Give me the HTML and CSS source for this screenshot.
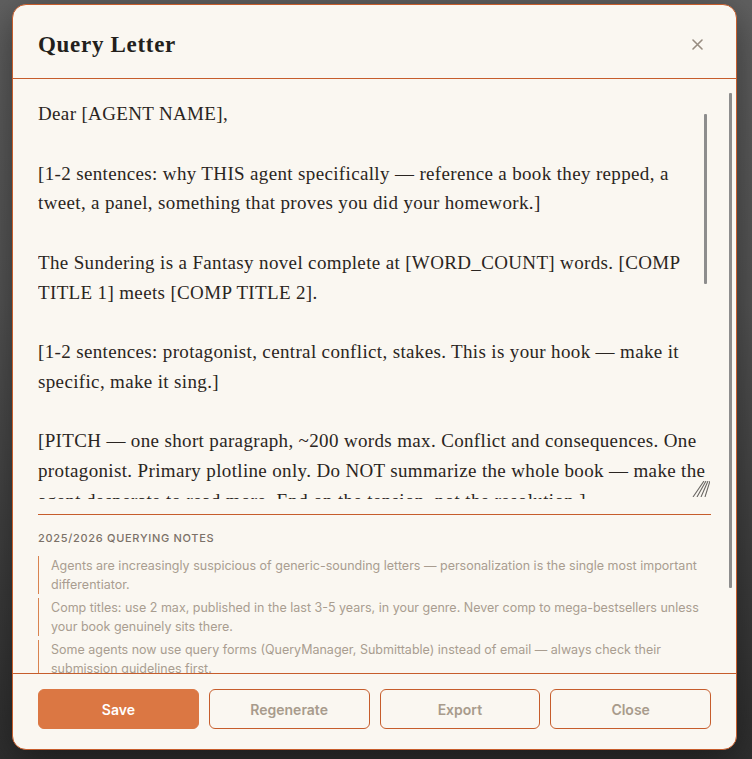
FILE: index.html
```html
<!DOCTYPE html>
<html lang="en">
<head>
<meta charset="utf-8">
<title>Query Letter</title>
<link rel="stylesheet" href="styles.css">
</head>
<body>
<div class="backdrop">
  <div class="modal">
    <header class="modal-header">
      <h2 class="modal-title">Query Letter</h2>
      <button class="close-btn" aria-label="Close">
        <svg width="11" height="11" viewBox="0 0 11 11"><path d="M1 1 L10 10 M10 1 L1 10" stroke="#978c80" stroke-width="1.6" stroke-linecap="round"/></svg>
      </button>
    </header>
    <div class="modal-body">
      <div class="letter-wrap">
        <textarea class="letter" spellcheck="false">Dear [AGENT NAME],

[1-2 sentences: why THIS agent specifically — reference a book they repped, a tweet, a panel, something that proves you did your homework.]

The Sundering is a Fantasy novel complete at [WORD_COUNT] words. [COMP TITLE 1] meets [COMP TITLE 2].

[1-2 sentences: protagonist, central conflict, stakes. This is your hook — make it specific, make it sing.]

[PITCH — one short paragraph, ~200 words max. Conflict and consequences. One protagonist. Primary plotline only. Do NOT summarize the whole book — make the agent desperate to read more. End on the tension, not the resolution.]

[BIO — 2-3 sentences. Relevant credentials only: writing credits, expertise, or lived experience that connects to the book. No credits? One line about you is fine.]

Per your submission guidelines, I've included [THE FIRST X PAGES / SYNOPSIS] below. Thank you for your time and consideration.

Sincerely,
[YOUR NAME]
[EMAIL] | [PHONE] | [WEBSITE]</textarea>
        <span class="letter-thumb"></span>
        <svg class="grip" width="18" height="16" viewBox="0 0 18 16"><path d="M1 16 L12 0 M5 16 L14 0 M9 16 L16 0 M13 16 L18 0" stroke="#6a6763" stroke-width="1.1"/></svg>
      </div>
      <section class="notes">
        <h3 class="notes-title">2025/2026 Querying Notes</h3>
        <ul class="notes-list">
          <li>Agents are increasingly suspicious of generic-sounding letters — personalization is the single most important differentiator.</li>
          <li>Comp titles: use 2 max, published in the last 3-5 years, in your genre. Never comp to mega-bestsellers unless your book genuinely sits there.</li>
          <li>Some agents now use query forms (QueryManager, Submittable) instead of email — always check their submission guidelines first.</li>
          <li>Response times vary widely — many agents now follow a no-response-means-no policy after 6-12 weeks.</li>
        </ul>
      </section>
    </div>
    <span class="body-thumb"></span>
    <footer class="modal-footer">
      <button class="btn btn-primary">Save</button>
      <button class="btn btn-outline">Regenerate</button>
      <button class="btn btn-outline">Export</button>
      <button class="btn btn-outline">Close</button>
    </footer>
  </div>
</div>
</body>
</html>
```

FILE: styles.css
```css
* { box-sizing: border-box; }

html, body {
  margin: 0;
  padding: 0;
  height: 100%;
}

body {
  background: linear-gradient(180deg, #616161 0%, #555555 40%, #3c3c3c 78%, #2f2f2f 100%);
  overflow: hidden;
}

.backdrop {
  height: 759px;
  padding: 4px 0 0 12px;
}

.modal {
  position: relative;
  width: 725px;
  height: 746px;
  background: #faf7f1;
  border: 1px solid #c65d2c;
  border-radius: 14px;
  display: flex;
  flex-direction: column;
  overflow: hidden;
  box-shadow: 0 10px 40px rgba(0, 0, 0, 0.45);
}

.modal-header {
  flex: 0 0 74px;
  display: flex;
  align-items: center;
  justify-content: space-between;
  padding: 6px 27px 0 25px;
  border-bottom: 1px solid #c65d2c;
}

.modal-title {
  margin: 0;
  font-family: "Liberation Serif", "DejaVu Serif", serif;
  font-weight: 700;
  font-size: 23px;
  letter-spacing: 0.7px;
  color: #231f1c;
}

.close-btn {
  width: 24px;
  height: 24px;
  padding: 0;
  border: 0;
  background: transparent;
  display: flex;
  align-items: center;
  justify-content: center;
  cursor: pointer;
}

.modal-body {
  flex: 1 1 auto;
  overflow-y: auto;
  scrollbar-width: none;
  padding: 20px 25px 24px 25px;
}

.body-thumb {
  position: absolute;
  left: 716px;
  top: 88px;
  width: 3px;
  height: 495px;
  border-radius: 1px;
  background: #8d8d8d;
}

.letter-wrap {
  position: relative;
  width: 673px;
  height: 400px;
}

.letter {
  display: block;
  width: 673px;
  height: 400px;
  margin: 0;
  padding: 0;
  border: 0;
  outline: none;
  background: transparent;
  resize: none;
  scrollbar-width: none;
  font-family: "Liberation Serif", "DejaVu Serif", serif;
  font-size: 19px;
  letter-spacing: 0.35px;
  line-height: 29.75px;
  color: #2a2521;
}

.letter-thumb {
  position: absolute;
  left: 666px;
  top: 15px;
  width: 3px;
  height: 170px;
  border-radius: 1px;
  background: #8d8d8d;
}

.grip {
  position: absolute;
  right: 1px;
  bottom: 2px;
}

.notes {
  margin-top: 15px;
  border-top: 1px solid #c65d2c;
  padding-top: 16px;
  width: 673px;
}

.notes-title {
  margin: 0 0 11px 0;
  font-family: "Inter", "Liberation Sans", sans-serif;
  font-size: 11px;
  line-height: 14px;
  font-weight: 500;
  letter-spacing: 0.7px;
  text-transform: uppercase;
  color: #7b7168;
}

.notes-list {
  list-style: none;
  margin: 0;
  padding: 0;
  display: flex;
  flex-direction: column;
  gap: 4px;
}

.notes-list li {
  border-left: 1px solid #d9834f;
  padding: 0 0 0 12px;
  font-family: "Inter", "Liberation Sans", sans-serif;
  font-size: 12.5px;
  line-height: 19px;
  color: #a99d90;
}

.modal-footer {
  flex: 0 0 76px;
  border-top: 1px solid #c65d2c;
  padding: 15px 25px 0 25px;
  display: grid;
  grid-template-columns: repeat(4, 1fr);
  gap: 10px;
  align-items: start;
}

.btn {
  height: 40px;
  border-radius: 6px;
  font-family: "Inter", "Liberation Sans", sans-serif;
  font-size: 14px;
  font-weight: 600;
  cursor: pointer;
}

.btn-primary {
  background: #db7743;
  border: 1px solid #db7743;
  color: #ffffff;
}

.btn-outline {
  background: transparent;
  border: 1px solid #c65d2c;
  color: #a89b8c;
}
```
